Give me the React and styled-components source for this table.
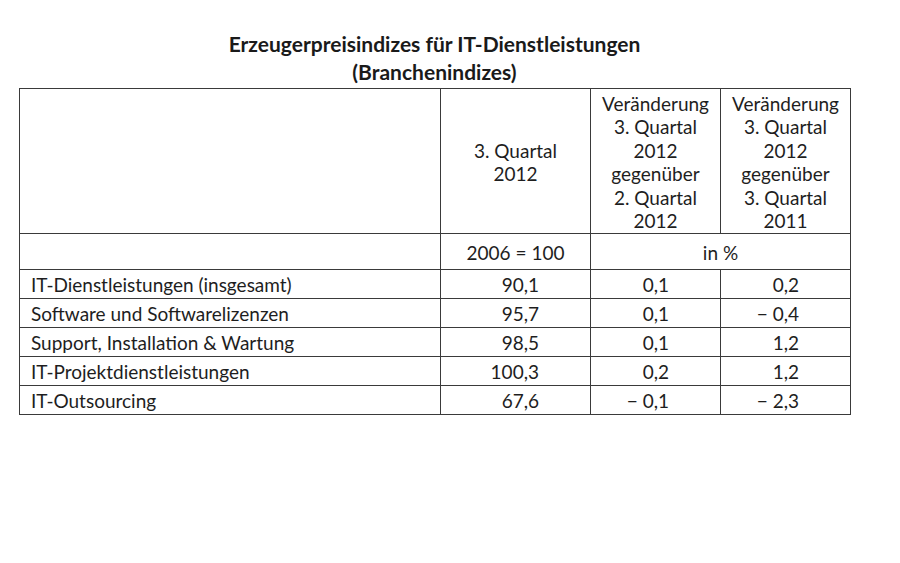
import React from "react";
import styled, { createGlobalStyle } from "styled-components";

const Global = createGlobalStyle`
  html, body { margin: 0; padding: 0; background: #ffffff; }
  body { font-family: Lato, "Open Sans", sans-serif; color: #1e1e1e; }
`;

const Page = styled.div`
  width: 900px;
  height: 563px;
  box-sizing: border-box;
  padding: 30px 0 0 19px;
`;

const Wrap = styled.div`
  width: 831px;
`;

const Title = styled.h1`
  margin: 0;
  font-size: 21px;
  font-weight: 700;
  line-height: 28px;
  text-align: center;
  color: #1a1a1a;
`;

const Table = styled.table`
  border-collapse: collapse;
  table-layout: fixed;
  width: 831px;
  margin-top: 2px;
  font-size: 19px;
  color: #1e1e1e;
`;

const Cell = styled.td`
  border: 1px solid #3a3a3a;
  padding: ${(p) => (p.$num ? "2px 51px 0 0" : p.$label ? "2px 0 0 11px" : "2px 0 0 0")};
  height: ${(p) => p.$h}px;
  box-sizing: border-box;
  text-align: ${(p) => (p.$num ? "right" : p.$label ? "left" : "center")};
  vertical-align: middle;
  line-height: ${(p) => (p.$head ? "23.5px" : "20px")};
  white-space: nowrap;
`;

const rows = [
  ["IT-Dienstleistungen (insgesamt)", "90,1", "0,1", "0,2"],
  ["Software und Softwarelizenzen", "95,7", "0,1", "\u2212 0,4"],
  ["Support, Installation & Wartung", "98,5", "0,1", "1,2"],
  ["IT-Projektdienstleistungen", "100,3", "0,2", "1,2"],
  ["IT-Outsourcing", "67,6", "\u2212 0,1", "\u2212 2,3"],
];

export default function App() {
  return (
    <Page>
      <Global />
      <Wrap>
        <Title>
          Erzeugerpreisindizes für IT-Dienstleistungen
          <br />
          (Branchenindizes)
        </Title>
        <Table>
          <colgroup>
            <col style={{ width: 421 }} />
            <col style={{ width: 150 }} />
            <col style={{ width: 130 }} />
            <col style={{ width: 130 }} />
          </colgroup>
          <tbody>
            <tr>
              <Cell $h={145} $head />
              <Cell $h={145} $head>
                3. Quartal
                <br />
                2012
              </Cell>
              <Cell $h={145} $head>
                Veränderung
                <br />
                3. Quartal
                <br />
                2012
                <br />
                gegenüber
                <br />
                2. Quartal
                <br />
                2012
              </Cell>
              <Cell $h={145} $head>
                Veränderung
                <br />
                3. Quartal
                <br />
                2012
                <br />
                gegenüber
                <br />
                3. Quartal
                <br />
                2011
              </Cell>
            </tr>
            <tr>
              <Cell $h={36} />
              <Cell $h={36}>2006 = 100</Cell>
              <Cell $h={36} colSpan={2}>
                in %
              </Cell>
            </tr>
            {rows.map((r) => (
              <tr key={r[0]}>
                <Cell $h={29} $label>
                  {r[0]}
                </Cell>
                <Cell $h={29} $num>
                  {r[1]}
                </Cell>
                <Cell $h={29} $num>
                  {r[2]}
                </Cell>
                <Cell $h={29} $num>
                  {r[3]}
                </Cell>
              </tr>
            ))}
          </tbody>
        </Table>
      </Wrap>
    </Page>
  );
}
